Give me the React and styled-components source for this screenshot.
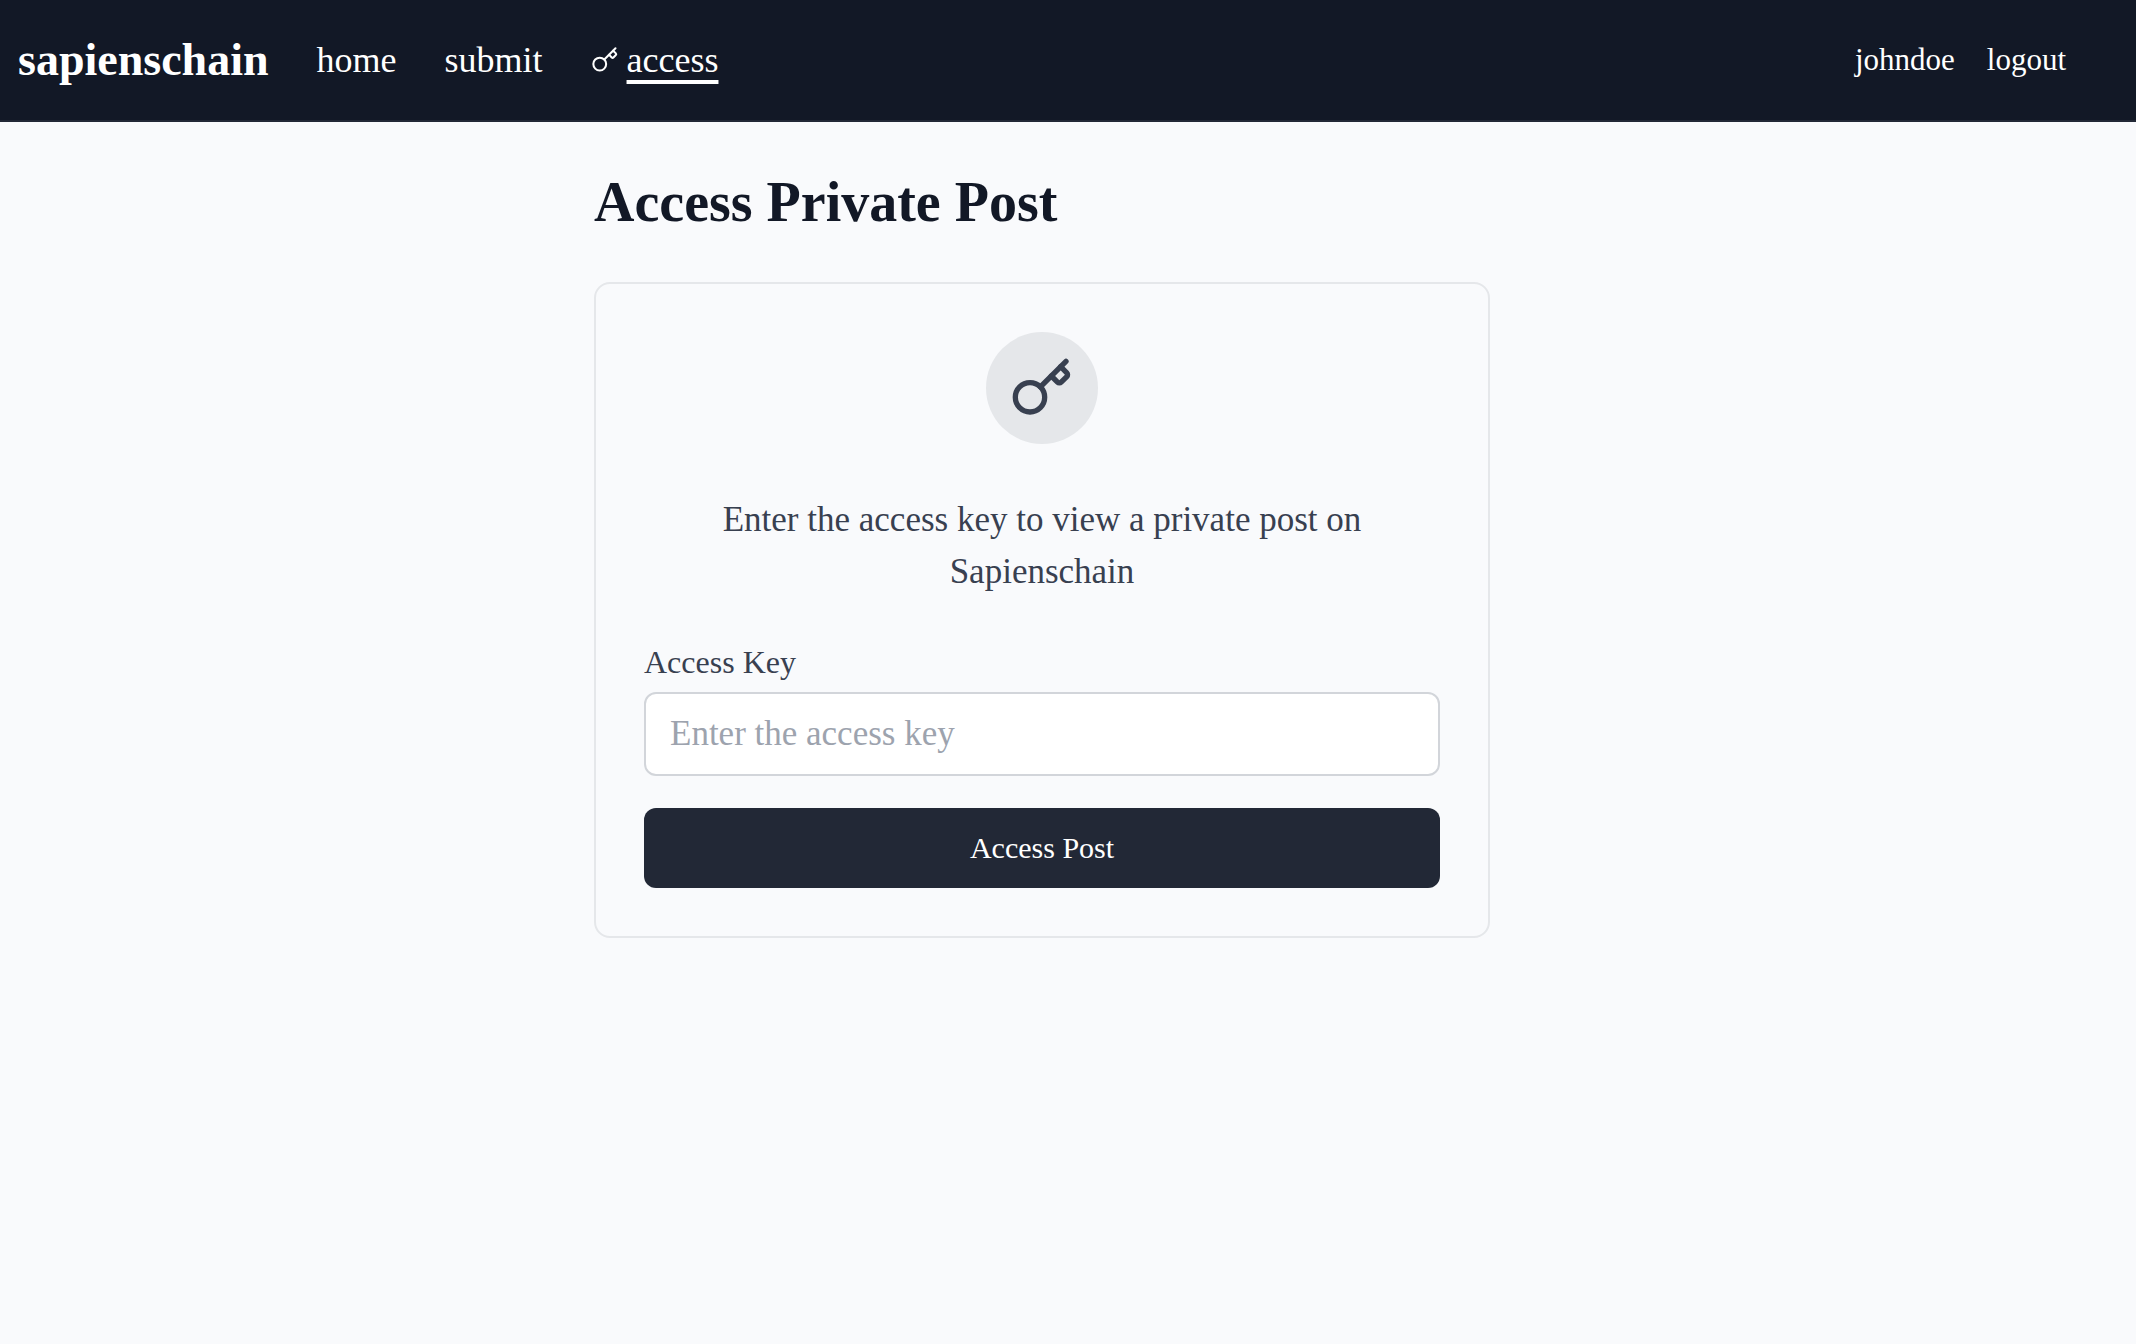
import React, {useState} from 'react';
import styled, {createGlobalStyle} from 'styled-components';
import {Key} from 'lucide-react';

const GlobalStyle = createGlobalStyle`
  *, *::before, *::after {
    box-sizing: border-box;
  }

  body {
    margin: 0;
    min-height: 100vh;
    background-color: #f9fafc;
    color: #121826;
    font-family: "Liberation Serif", serif;
    font-size: 35px;
  }
`;

const Header = styled.header`
  display: flex;
  align-items: center;
  justify-content: space-between;
  padding: 36px 70px 36px 18px;
  background-color: #121826;
  border-bottom: 2px solid #222836;
`;

const Nav = styled.nav`
  display: flex;
  align-items: center;
  gap: ${props => props.$gap};
`;

const Logo = styled.a`
  color: white;
  font-size: 46px;
  font-weight: 700;
  line-height: 48px;
  text-decoration: none;
`;

const NavLink = styled.a`
  display: inline-flex;
  align-items: center;
  gap: 8px;
  color: white;
  font-size: ${props => props.$small ? '31px' : '36px'};
  line-height: 48px;
  text-decoration: none;
`;

const ActiveLabel = styled.span`
  text-decoration: underline;
  text-decoration-thickness: 4px;
  text-underline-offset: 8px;
`;

const Main = styled.main`
  padding: 50px 52px 50px 0;
`;

const Container = styled.div`
  max-width: 896px;
  margin: 0 auto;
`;

const Title = styled.h1`
  margin: 0 0 50px;
  font-size: 56px;
  font-weight: 700;
  line-height: 60px;
`;

const Card = styled.section`
  padding: 48px;
  border: 2px solid #e5e7ea;
  border-radius: 16px;
`;

const IconCircle = styled.div`
  display: flex;
  align-items: center;
  justify-content: center;
  width: 112px;
  height: 112px;
  margin: 0 auto 50px;
  border-radius: 50%;
  background-color: #e5e7ea;
  color: #384050;
`;

const Description = styled.p`
  margin: 0 0 44px;
  color: #384050;
  line-height: 52px;
  text-align: center;
`;

const Label = styled.label`
  display: block;
  margin-bottom: 10px;
  color: #384050;
  font-size: 32px;
  line-height: 40px;
`;

const Input = styled.input`
  display: block;
  width: 100%;
  height: 84px;
  margin-bottom: 32px;
  padding: 0 24px;
  border: 2px solid #d2d5da;
  border-radius: 12px;
  background-color: white;
  color: #121826;
  font: inherit;

  &::placeholder {
    color: #9da3ae;
    opacity: 1;
  }
`;

const SubmitButton = styled.button`
  display: block;
  width: 100%;
  height: 80px;
  border: none;
  border-radius: 12px;
  background-color: #222836;
  color: white;
  font-family: inherit;
  font-size: 30px;
  cursor: pointer;
`;

const App = () => {
  const [accessKey, setAccessKey] = useState('');

  const handleSubmit = (e) => {
    e.preventDefault();
  };

  return (<>
    <GlobalStyle/>
    <Header>
      <Nav $gap="48px">
        <Logo href="#">sapienschain</Logo>
        <NavLink href="#home">home</NavLink>
        <NavLink href="#submit">submit</NavLink>
        <NavLink href="#access" aria-current="page">
          <Key size={28} strokeWidth={1.75} aria-hidden="true"/>
          <ActiveLabel>access</ActiveLabel>
        </NavLink>
      </Nav>
      <Nav $gap="32px">
        <NavLink href="#profile" $small>johndoe</NavLink>
        <NavLink href="#logout" $small>logout</NavLink>
      </Nav>
    </Header>
    <Main>
      <Container>
        <Title>Access Private Post</Title>
        <Card>
          <IconCircle>
            <Key size={64} aria-hidden="true"/>
          </IconCircle>
          <Description>Enter the access key to view a private post on Sapienschain</Description>
          <form onSubmit={handleSubmit}>
            <Label htmlFor="accessKey">Access Key</Label>
            <Input
              id="accessKey"
              type="text"
              placeholder="Enter the access key"
              value={accessKey}
              onChange={e => setAccessKey(e.target.value)}
            />
            <SubmitButton type="submit">Access Post</SubmitButton>
          </form>
        </Card>
      </Container>
    </Main>
  </>);
};

export default App;
